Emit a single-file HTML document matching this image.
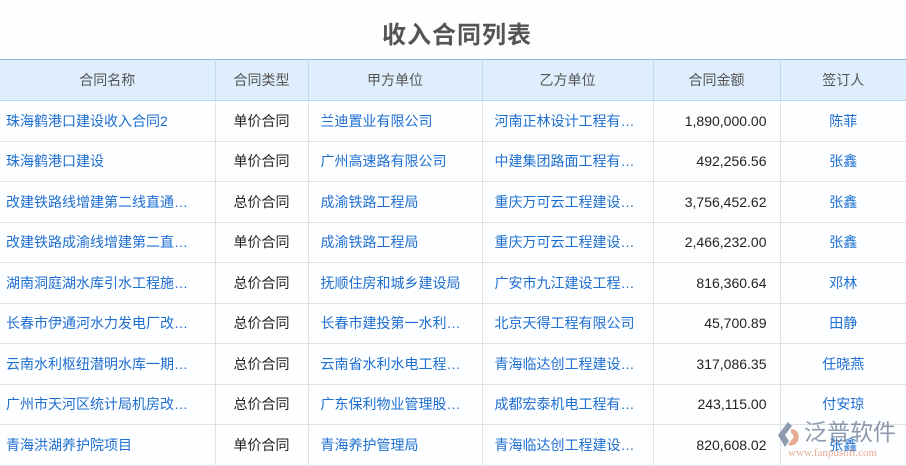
<!DOCTYPE html>
<html><head><meta charset="utf-8"><style>
body{margin:0;width:906px;height:466px;overflow:hidden;background:#fdfeff;font-family:"Liberation Sans","Noto Sans CJK SC",sans-serif;position:relative}
h1{margin:0;position:absolute;top:15px;left:4px;width:906px;text-align:center;font-size:24px;color:#555;font-weight:bold;letter-spacing:1px}
table{position:absolute;top:59px;left:0;border-collapse:collapse;table-layout:fixed;width:906px;font-size:14px}
th{background:#deeefc;color:#555;font-weight:normal;height:40px;padding:0;border-top:1px solid #8cb8e0;border-bottom:1px solid #bcd6ee;border-right:1px solid #c4d8ea}
td{height:39.5px;padding:0 6px;border-bottom:1px solid #e2e2e2;border-right:1px solid #e2e2e2;white-space:nowrap;overflow:hidden;color:#1e6fd0}
th:last-child,td:last-child{border-right:none}
td.t{color:#222;text-align:center}
td.a{color:#222;text-align:right;padding-right:13px}
td.s{text-align:center}
td.p{padding-left:12px}
</style></head><body>
<h1>收入合同列表</h1>
<table>
<colgroup><col style="width:215px"><col style="width:93px"><col style="width:174px"><col style="width:171px"><col style="width:127px"><col style="width:126px"></colgroup>
<tr><th>合同名称</th><th>合同类型</th><th>甲方单位</th><th>乙方单位</th><th>合同金额</th><th>签订人</th></tr>
<tr><td>珠海鹤港口建设收入合同2</td><td class="t">单价合同</td><td class="p">兰迪置业有限公司</td><td class="p">河南正林设计工程有…</td><td class="a">1,890,000.00</td><td class="s">陈菲</td></tr>
<tr><td>珠海鹤港口建设</td><td class="t">单价合同</td><td class="p">广州高速路有限公司</td><td class="p">中建集团路面工程有…</td><td class="a">492,256.56</td><td class="s">张鑫</td></tr>
<tr><td>改建铁路线增建第二线直通…</td><td class="t">总价合同</td><td class="p">成渝铁路工程局</td><td class="p">重庆万可云工程建设…</td><td class="a">3,756,452.62</td><td class="s">张鑫</td></tr>
<tr><td>改建铁路成渝线增建第二直…</td><td class="t">单价合同</td><td class="p">成渝铁路工程局</td><td class="p">重庆万可云工程建设…</td><td class="a">2,466,232.00</td><td class="s">张鑫</td></tr>
<tr><td>湖南洞庭湖水库引水工程施…</td><td class="t">总价合同</td><td class="p">抚顺住房和城乡建设局</td><td class="p">广安市九江建设工程…</td><td class="a">816,360.64</td><td class="s">邓林</td></tr>
<tr><td>长春市伊通河水力发电厂改…</td><td class="t">总价合同</td><td class="p">长春市建投第一水利…</td><td class="p">北京天得工程有限公司</td><td class="a">45,700.89</td><td class="s">田静</td></tr>
<tr><td>云南水利枢纽潜明水库一期…</td><td class="t">总价合同</td><td class="p">云南省水利水电工程…</td><td class="p">青海临达创工程建设…</td><td class="a">317,086.35</td><td class="s">任晓燕</td></tr>
<tr><td>广州市天河区统计局机房改…</td><td class="t">总价合同</td><td class="p">广东保利物业管理股…</td><td class="p">成都宏泰机电工程有…</td><td class="a">243,115.00</td><td class="s">付安琼</td></tr>
<tr><td>青海洪湖养护院项目</td><td class="t">单价合同</td><td class="p">青海养护管理局</td><td class="p">青海临达创工程建设…</td><td class="a">820,608.02</td><td class="s">张鑫</td></tr>
</table>
<div style="position:absolute;left:776px;top:421px;width:130px;height:40px;opacity:.75;white-space:nowrap">
<svg width="26" height="28" style="position:absolute;left:0;top:0" viewBox="0 0 26 28"><path d="M12 1 L2 14 L9 26 L13 20 L9 14 L16 5Z" fill="#6a7a94"/><path d="M15 8 Q25 9 22 20 Q18 26 12 24 L16 18 Q20 16 15 12Z" fill="#e09070"/></svg>
<span style="position:absolute;left:28px;top:-3px;font-size:23px;line-height:28px;color:#6a7a94;letter-spacing:0">泛普软件</span>
<span style="position:absolute;left:12px;top:26px;font-size:11px;line-height:12px;color:#e09070;font-family:'Liberation Serif',serif">www.fanpusoft.com</span>
</div>
</body></html>
